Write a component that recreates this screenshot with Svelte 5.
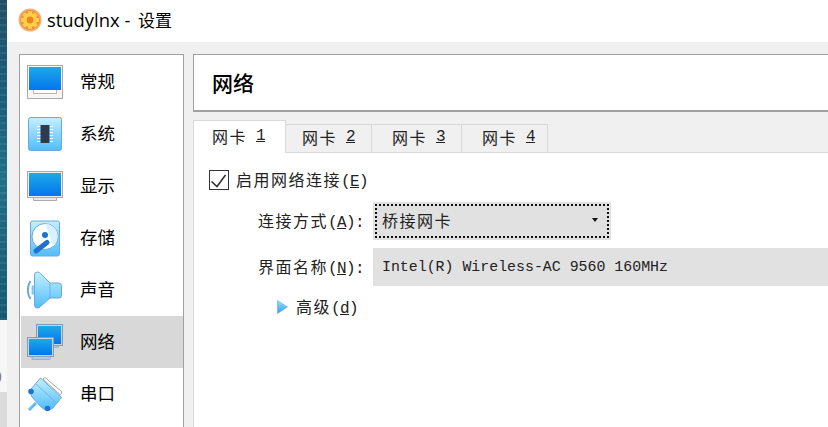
<script>
  const tabs = ['1', '2', '3', '4'];
  const nav = [
    { id: 'general', label: '常规' },
    { id: 'system', label: '系统' },
    { id: 'display', label: '显示' },
    { id: 'storage', label: '存储' },
    { id: 'audio', label: '声音' },
    { id: 'network', label: '网络', active: true },
    { id: 'serial', label: '串口' }
  ];
</script>

<svg class="defs" width="0" height="0">
  <defs>
    <linearGradient id="screen" x1="0" y1="0" x2="0" y2="1">
      <stop offset="0" stop-color="#1fa9e6" />
      <stop offset="1" stop-color="#0275f0" />
    </linearGradient>
    <linearGradient id="pale" x1="0" y1="0" x2="0" y2="1">
      <stop offset="0" stop-color="#c4f0ff" />
      <stop offset="1" stop-color="#50bdfa" />
    </linearGradient>
    <linearGradient id="tri" x1="0" y1="0" x2="0" y2="1">
      <stop offset="0" stop-color="#9edcfa" />
      <stop offset="1" stop-color="#2f9ff0" />
    </linearGradient>
  </defs>
</svg>

<div class="screen">
  <div class="desktop">
    <div class="strip"></div>
    <div class="edge">)</div>
    <div class="edge-foot"></div>
  </div>
  <div class="window">
    <header class="titlebar">
      <svg class="logo" width="24" height="24" viewBox="0 0 24 24">
        <circle cx="12" cy="12" r="11.5" fill="#f3b07a" />
        <circle cx="12" cy="12" r="10" fill="#ee9336" />
        <g fill="#ffcf4a">
          <circle cx="12" cy="12" r="7" />
          <rect x="10" y="3" width="4" height="18" rx="1" />
          <rect x="3" y="10" width="18" height="4" rx="1" />
          <rect x="10" y="3" width="4" height="18" rx="1" transform="rotate(45 12 12)" />
          <rect x="3" y="10" width="18" height="4" rx="1" transform="rotate(45 12 12)" />
        </g>
        <circle cx="12" cy="12" r="3.4" fill="#ec8420" />
      </svg>
      <span>studylnx - <span class="title-cjk">设置</span></span>
    </header>

    <div class="body">
      <nav class="sidebar">
        {#each nav as item}
          <div class="nav-item" class:active={item.active}>
            <div class="nav-icon">
              {#if item.id === 'general'}
                <svg width="36" height="34" viewBox="0 0 36 34">
                  <rect x="0.5" y="0.5" width="35" height="33" fill="#f6f6f6" stroke="#a9a9a9" />
                  <rect x="2" y="2" width="32" height="23" fill="url(#screen)" />
                  <path d="M6.5 25v3.5h23V25" fill="#fff" stroke="#b5b5b5" />
                </svg>
              {:else if item.id === 'system'}
                <svg width="36" height="36" viewBox="0 0 36 36">
                  <rect x="1.5" y="1.5" width="33" height="33" rx="2" fill="url(#pale)" stroke="#6aa8e0" />
                  <path d="M10 10.5h16M10 13.5h16M10 16.5h16M10 19.5h16M10 22.5h16M10 25.5h16" stroke="#fff" />
                  <rect x="13.5" y="9" width="9" height="18" fill="#2f3a4c" />
                </svg>
              {:else if item.id === 'display'}
                <svg width="36" height="30" viewBox="0 0 36 30">
                  <path d="M6.5 25v4.5h23V25" fill="#e8e8e8" stroke="#a9a9a9" />
                  <rect x="0.5" y="0.5" width="35" height="26" fill="#eee" stroke="#a9a9a9" />
                  <rect x="2" y="2" width="32" height="23" fill="url(#screen)" />
                </svg>
              {:else if item.id === 'storage'}
                <svg width="32" height="37" viewBox="0 0 32 37">
                  <rect x="1.5" y="1" width="29" height="35" rx="2" fill="url(#pale)" stroke="#6aa8e0" />
                  <circle cx="16" cy="16.5" r="13" fill="#fff" stroke="#6aa8e0" />
                  <path d="M16 3.5a13 13 0 0 1 8 23" fill="#d8f2ff" />
                  <circle cx="16" cy="15" r="3" fill="#1c74d0" />
                  <path d="M7 31l11-8.5" stroke="#1c74d0" stroke-width="5" stroke-linecap="round" />
                </svg>
              {:else if item.id === 'audio'}
                <svg width="36" height="38" viewBox="0 0 36 38">
                  <path d="M3.5 10C0 15 0 23 3.5 28" fill="none" stroke="#6aa8e0" stroke-width="2" />
                  <rect x="5" y="15" width="4" height="8" fill="#8ed4fa" stroke="#6aa8e0" stroke-width="0.6" />
                  <path d="M7.5 4q0-3 3-3q2 0 3 1.5L23 12h9q2.5 0 2.5 2.5v10q0 2.5-2.5 2.5h-9l-9.500 8.500Q12.500 37 10.500 37q-3 0-3-3z" fill="url(#pale)" stroke="#6aa8e0" />
                  <path d="M23 12v15" stroke="#6aa8e0" stroke-width="0.8" />
                </svg>
              {:else if item.id === 'network'}
                <svg width="36" height="36" viewBox="0 0 36 36">
                  <rect x="9.5" y="0.5" width="26" height="21" fill="#c4d4e2" stroke="#8a9aaa" />
                  <rect x="11" y="2" width="23" height="18" fill="url(#screen)" />
                  <rect x="26.5" y="21.5" width="5" height="2" fill="#a8c4dc" stroke="#8a9aaa" stroke-width="0.5" />
                  <rect x="0.5" y="13.5" width="26" height="19" fill="#c4d4e2" stroke="#8a9aaa" />
                  <rect x="2" y="15" width="23" height="16" fill="url(#screen)" />
                  <rect x="5" y="32.5" width="18" height="3" fill="#a8cdec" stroke="#8a9aaa" stroke-width="0.6" />
                </svg>
              {:else}
                <svg width="36" height="36" viewBox="0 0 36 36">
                  <path d="M18 1.500l17 14.500-1.500 3L16 3z" fill="#fff" stroke="#a9a9a9" />
                  <path d="M13.500 2l21 19.500-9 11q-6 3-11-1L5 21q-3-5-1-8z" fill="url(#pale)" stroke="#6aa8e0" />
                  <path d="M9 8l20 18.500" stroke="#6aa8e0" stroke-width="0.8" />
                  <path d="M9 27l-7 7" stroke="#6ab8f0" stroke-width="3" />
                  <circle cx="4" cy="15.500" r="2.800" fill="#1c74d0" />
                  <circle cx="20.500" cy="32.500" r="2.800" fill="#1c74d0" />
                </svg>
              {/if}
            </div>
            <span class="nav-label">{item.label}</span>
          </div>
        {/each}
      </nav>

      <main class="content">
        <div class="page-title">网络</div>

        <div class="tabs">
          {#each tabs as t, i}
            <div class="tab" class:selected={i === 0}>网卡<span class="m digit"><u>{t}</u></span></div>
          {/each}
        </div>

        <section class="panel">
          <div class="check-row">
            <span class="checkbox">
              <svg width="18" height="18" viewBox="0 0 18 18">
                <path d="M1.500 10.500l5.500 5L15.500 4" fill="none" stroke="#333" stroke-width="1.600" />
              </svg>
            </span>
            <span>启用网络连接<span class="m">(<u>E</u>)</span></span>
          </div>

          <div class="form">
            <label class="field-label" for="mode">连接方式<span class="m">(<u>A</u>):</span></label>
            <div class="select" id="mode">
              <span>桥接网卡</span>
              <span class="caret"></span>
            </div>
            <label class="field-label" for="iface">界面名称<span class="m">(<u>N</u>):</span></label>
            <div class="readout" id="iface">Intel(R) Wireless-AC 9560 160MHz</div>
          </div>

          <div class="advanced">
            <svg width="11" height="14" viewBox="0 0 11 14">
              <path d="M0.5 0.5L10.5 7L0.5 13.5z" fill="url(#tri)" stroke="#5aa8e8" stroke-width="0.6" />
            </svg>
            <span>高级<span class="m">(<u>d</u>)</span></span>
          </div>
        </section>
      </main>
    </div>
  </div>
</div>

<style>
  :global(body) {
    margin: 0;
    background: #fff;
  }
  .defs {
    position: absolute;
  }
  .screen {
    display: flex;
    width: 828px;
    height: 427px;
    overflow: hidden;
    font-family: "Noto Sans CJK SC", sans-serif;
    font-size: 16px;
    color: #111;
  }
  .desktop {
    width: 7px;
    display: flex;
    flex-direction: column;
    flex: none;
    background: #f6f6f6;
    overflow: hidden;
  }
  .strip {
    height: 320px;
    flex: none;
    background:
      repeating-linear-gradient(0deg, rgba(255, 255, 255, 0.07) 0 2px, transparent 2px 7px),
      linear-gradient(180deg, #234f68 0%, #1a5f7a 30%, #1f7088 55%, #1c6278 80%, #165a70 100%);
  }
  .edge {
    flex: 1;
    padding-top: 47px;
    margin-left: -3px;
    font-family: "Liberation Sans", sans-serif;
    font-size: 15px;
    line-height: 18px;
    color: #8a6a50;
  }
  .edge-foot {
    height: 35px;
    flex: none;
    background: #dcdcdc;
  }
  .window {
    flex: 1;
    min-width: 0;
    display: flex;
    flex-direction: column;
    background: #f0f0f0;
  }
  .titlebar {
    height: 42px;
    flex: none;
    box-sizing: border-box;
    background: #fff;
    display: flex;
    align-items: center;
    gap: 5px;
    padding: 0 0 3px 11px;
    font-family: "Open Sans", "Noto Sans CJK SC", sans-serif;
    font-size: 18.4px;
    color: #000;
    white-space: pre;
  }
  .title-cjk {
    font-size: 17px;
    margin-left: 3px;
  }
  .logo {
    flex: none;
  }
  .body {
    flex: 1;
    display: flex;
    min-height: 0;
    padding: 12px 0 0 12px;
    gap: 9px;
  }
  .sidebar {
    width: 163px;
    flex: none;
    background: #fff;
    border: 1px solid #a0a0a0;
    border-bottom: none;
    padding-top: 1px;
  }
  .nav-item {
    height: 52px;
    display: flex;
    align-items: center;
    margin-left: 1px;
    font-size: 17.5px;
  }
  .nav-item.active {
    background: #d8d8d8;
  }
  .nav-icon {
    width: 36px;
    margin-left: 6px;
    display: flex;
    justify-content: center;
    align-items: center;
  }
  .nav-label {
    margin-left: 17px;
    margin-top: -3px;
    color: #000;
  }
  .content {
    flex: 1;
    min-width: 0;
    display: flex;
    flex-direction: column;
  }
  .page-title {
    height: 53px;
    flex: none;
    background: #fff;
    border: 1px solid #a0a0a0;
    border-bottom-width: 2px;
    border-right: none;
    padding-left: 18px;
    padding-bottom: 2px;
    box-sizing: content-box;
    margin-bottom: -2px;
    display: flex;
    align-items: center;
    font-size: 21px;
    font-weight: 500;
    color: #000;
  }
  .tabs {
    display: flex;
    margin-top: 10px;
    height: 32px;
    flex: none;
    border-bottom: 1px solid #d9d9d9;
    align-items: flex-end;
  }
  .tab {
    height: 29px;
    width: 86px;
    flex: none;
    margin-bottom: -1px;
    padding: 0 0 3px 16px;
    box-sizing: border-box;
    background: #f0f0f0;
    border: 1px solid #d9d9d9;
    border-left: none;
    display: flex;
    align-items: center;
    letter-spacing: 1.5px;
    color: #222;
  }
  .tab:nth-child(3) {
    width: 90px;
    padding-left: 20px;
  }
  .tab:nth-child(4) {
    padding-left: 20px;
  }
  .tab.selected {
    height: 33px;
    width: 93px;
    padding: 0 0 3px 18px;
    background: #fff;
    border: 1px solid #d9d9d9;
    border-bottom: none;
  }
  .m {
    font-family: "Liberation Mono", monospace;
    font-size: 16px;
    letter-spacing: -0.6px;
  }
  .digit {
    margin-left: 9px;
  }
  .panel {
    flex: 1;
    background: #fff;
    padding: 17px 0 0 15px;
    border-left: 1px solid #d9d9d9;
    letter-spacing: 1.5px;
    color: #222;
  }
  .check-row {
    display: flex;
    align-items: center;
    gap: 7px;
    height: 20px;
  }
  .check-row > span:last-child,
  .advanced > span {
    margin-top: -3px;
  }
  .checkbox {
    width: 20px;
    height: 20px;
    box-sizing: border-box;
    border: 1px solid #333;
    display: flex;
  }
  .form {
    display: grid;
    grid-template-columns: 171px 1fr;
    column-gap: 8px;
    row-gap: 8px;
    margin-top: 12px;
    margin-left: -15px;
    align-items: center;
  }
  .field-label {
    text-align: right;
    padding-right: 1px;
    margin-top: -2px;
  }
  .select {
    position: relative;
    width: 238px;
    height: 38px;
    box-sizing: border-box;
    background: #e1e1e1;
    display: flex;
    align-items: center;
    justify-content: space-between;
    padding: 0 13px 3px 9px;
  }
  .select::before {
    content: "";
    position: absolute;
    inset: 2px;
    background:
      repeating-linear-gradient(90deg, #111 0 2px, transparent 2px 4px) top / 100% 2px no-repeat,
      repeating-linear-gradient(90deg, #111 0 2px, transparent 2px 4px) bottom / 100% 2px no-repeat,
      repeating-linear-gradient(0deg, #111 0 2px, transparent 2px 4px) left / 2px 100% no-repeat,
      repeating-linear-gradient(0deg, #111 0 2px, transparent 2px 4px) right / 2px 100% no-repeat;
  }
  .caret {
    width: 0;
    height: 0;
    border-left: 3px solid transparent;
    border-right: 3px solid transparent;
    border-top: 4px solid #111;
  }
  .readout {
    height: 38px;
    background: #e1e1e1;
    display: flex;
    align-items: center;
    padding-left: 9px;
    font-family: "Liberation Mono", monospace;
    font-size: 14.9px;
    letter-spacing: 0;
    white-space: nowrap;
  }
  .advanced {
    display: flex;
    align-items: center;
    gap: 8px;
    margin-top: 11px;
    margin-left: 68px;
    height: 20px;
  }
</style>
